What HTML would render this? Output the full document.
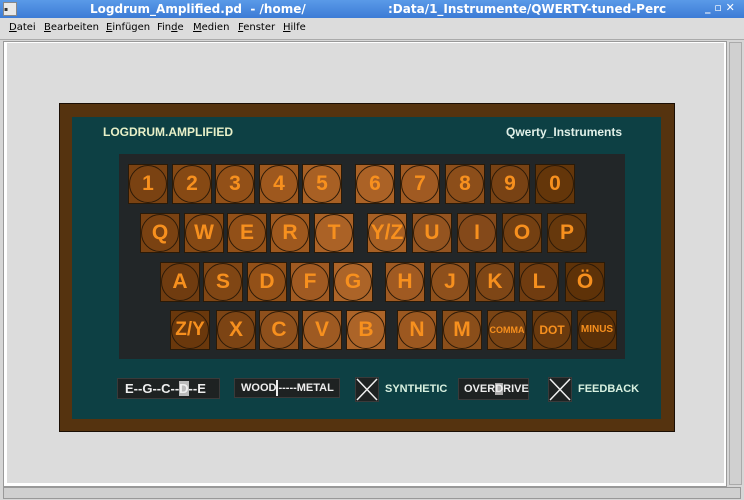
<!DOCTYPE html>
<html><head><meta charset="utf-8"><style>
*{margin:0;padding:0;box-sizing:border-box}
body{width:744px;height:500px;overflow:hidden;background:#d6d6d6;font-family:"Liberation Sans",sans-serif;position:relative}
.a{position:absolute}
.title{left:0;top:0;width:744px;height:18px;background:linear-gradient(#5a9ae8,#3c7bd6);color:#fff;font-family:"DejaVu Sans",sans-serif;font-size:12px;font-weight:bold}
.menu{top:18px;left:0;width:744px;height:22px;background:#dcdcdc;border-bottom:1px solid #aaa;font-family:"DejaVu Sans",sans-serif;font-size:10px;color:#000}
.menu span{position:absolute;top:4px}
.k{position:absolute;width:40px;height:40px;border:1px solid #2a1a08;font-weight:bold;color:#f7901e;text-align:center}
.k i{position:absolute;left:0;top:0;width:38px;height:38px;border:1px solid #2c1a08;border-radius:50%}
.k b{position:relative;display:block;line-height:38px;font-size:21px}
.box{position:absolute;background:#1e2222;border:1px solid #3a3a3a;color:#eee;font-weight:bold;font-size:11px}
.lbl{position:absolute;color:#d8f0e0;font-weight:bold;font-size:11px}
</style></head><body>
<div class="a title">
 <div class="a" style="left:3px;top:2px;width:14px;height:14px;background:#e8e8e8;border:1px solid #888;font-size:6px;color:#333;line-height:14px">▪</div>
 <span class="a" style="left:90px;top:2px">Logdrum_Amplified.pd&nbsp; - /home/</span>
 <span class="a" style="left:388px;top:2px">:Data/1_Instrumente/QWERTY-tuned-Perc</span>
 <span class="a" style="left:705px;top:1px;font-size:11px">_ ▫ ✕</span>
</div>
<div class="a menu">
 <span style="left:9px"><u>D</u>atei</span><span style="left:44px"><u>B</u>earbeiten</span><span style="left:106px"><u>E</u>infügen</span><span style="left:157px">Fin<u>d</u>e</span><span style="left:193px"><u>M</u>edien</span><span style="left:238px"><u>F</u>enster</span><span style="left:283px"><u>H</u>ilfe</span>
</div>
<div class="a" style="left:3px;top:41px;width:724px;height:446px;background:#fff;border:1px solid #999"></div>
<div class="a" style="left:7px;top:43px;width:717px;height:440px;background:#dcdcdc"></div>
<div class="a" style="left:729px;top:42px;width:13px;height:443px;background:#d0d0d0;border:1px solid #aaa"></div>
<div class="a" style="left:3px;top:487px;width:738px;height:12px;background:#d0d0d0;border:1px solid #999"></div>

<div class="a" style="left:59px;top:103px;width:616px;height:329px;background:#55330f;border:1px solid #1a0e04"></div>
<div class="a" style="left:72px;top:117px;width:589px;height:302px;background:#0d4044"></div>
<div class="a" style="left:103px;top:125px;color:#e8f0c8;font-weight:bold;font-size:12px">LOGDRUM.AMPLIFIED</div>
<div class="a" style="left:506px;top:125px;color:#e0f0e8;font-weight:bold;font-size:12px">Qwerty_Instruments</div>
<div class="a" style="left:119px;top:154px;width:506px;height:205px;background:#222628"></div>

<div class="k" style="left:128px;top:164px;background:#7a4212"><i></i><b>1</b></div>
<div class="k" style="left:172px;top:164px;background:#864914"><i></i><b>2</b></div>
<div class="k" style="left:215px;top:164px;background:#925018"><i></i><b>3</b></div>
<div class="k" style="left:259px;top:164px;background:#9e581e"><i></i><b>4</b></div>
<div class="k" style="left:302px;top:164px;background:#a86024"><i></i><b>5</b></div>
<div class="k" style="left:355px;top:164px;background:#ab6226"><i></i><b>6</b></div>
<div class="k" style="left:400px;top:164px;background:#a05a22"><i></i><b>7</b></div>
<div class="k" style="left:445px;top:164px;background:#8c4e1a"><i></i><b>8</b></div>
<div class="k" style="left:490px;top:164px;background:#784214"><i></i><b>9</b></div>
<div class="k" style="left:535px;top:164px;background:#64360a"><i></i><b>0</b></div>
<div class="k" style="left:140px;top:213px;background:#7a4212"><i></i><b>Q</b></div>
<div class="k" style="left:184px;top:213px;background:#864914"><i></i><b>W</b></div>
<div class="k" style="left:227px;top:213px;background:#925018"><i></i><b>E</b></div>
<div class="k" style="left:270px;top:213px;background:#9e581e"><i></i><b>R</b></div>
<div class="k" style="left:314px;top:213px;background:#ab6226"><i></i><b>T</b></div>
<div class="k" style="left:367px;top:213px;background:#a86024"><i></i><b>Y/Z</b></div>
<div class="k" style="left:412px;top:213px;background:#945420"><i></i><b>U</b></div>
<div class="k" style="left:457px;top:213px;background:#84491a"><i></i><b>I</b></div>
<div class="k" style="left:502px;top:213px;background:#744012"><i></i><b>O</b></div>
<div class="k" style="left:547px;top:213px;background:#66380c"><i></i><b>P</b></div>
<div class="k" style="left:160px;top:262px;background:#703c10"><i></i><b>A</b></div>
<div class="k" style="left:203px;top:262px;background:#804614"><i></i><b>S</b></div>
<div class="k" style="left:247px;top:262px;background:#925018"><i></i><b>D</b></div>
<div class="k" style="left:290px;top:262px;background:#a05a22"><i></i><b>F</b></div>
<div class="k" style="left:333px;top:262px;background:#ac6428"><i></i><b>G</b></div>
<div class="k" style="left:385px;top:262px;background:#a05a22"><i></i><b>H</b></div>
<div class="k" style="left:430px;top:262px;background:#8e501c"><i></i><b>J</b></div>
<div class="k" style="left:475px;top:262px;background:#7e4616"><i></i><b>K</b></div>
<div class="k" style="left:519px;top:262px;background:#703c10"><i></i><b>L</b></div>
<div class="k" style="left:565px;top:262px;background:#5e3208"><i></i><b>Ö</b></div>
<div class="k" style="left:170px;top:310px;background:#6a380c"><i></i><b style="font-size:19px">Z/Y</b></div>
<div class="k" style="left:216px;top:310px;background:#7c4414"><i></i><b>X</b></div>
<div class="k" style="left:259px;top:310px;background:#8e501c"><i></i><b>C</b></div>
<div class="k" style="left:302px;top:310px;background:#9e5a22"><i></i><b>V</b></div>
<div class="k" style="left:346px;top:310px;background:#ac6428"><i></i><b>B</b></div>
<div class="k" style="left:397px;top:310px;background:#9c5820"><i></i><b>N</b></div>
<div class="k" style="left:442px;top:310px;background:#8a4e1a"><i></i><b>M</b></div>
<div class="k" style="left:487px;top:310px;background:#7a4414"><i></i><b style="font-size:9px">COMMA</b></div>
<div class="k" style="left:532px;top:310px;background:#6a3a0e"><i></i><b style="font-size:12px">DOT</b></div>
<div class="k" style="left:577px;top:310px;background:#5a3008"><i></i><b style="font-size:10px">MINUS</b></div>

<div class="box" style="left:117px;top:378px;width:103px;height:21px;font-size:13px;line-height:20px;padding-left:7px">E--G--C--<span style="background:#bbb;color:#eee">D</span>--E</div>
<div class="box" style="left:234px;top:378px;width:106px;height:20px;line-height:18px;padding-left:6px">WOOD<span style="display:inline-block;width:2px;height:16px;background:#eee;vertical-align:middle"></span>-----METAL</div>
<div class="box" style="left:355px;top:377px;width:24px;height:25px"><svg width="22" height="23"><path d="M1 1L21 22M21 1L1 22" stroke="#eee" stroke-width="1.5"/></svg></div>
<div class="lbl" style="left:385px;top:383px">SYNTHETIC</div>
<div class="box" style="left:458px;top:378px;width:71px;height:22px;line-height:21px;padding-left:5px">OVER<span style="background:#aaa;color:#eee">D</span>RIVE</div>
<div class="box" style="left:548px;top:377px;width:24px;height:25px"><svg width="22" height="23"><path d="M1 1L21 22M21 1L1 22" stroke="#eee" stroke-width="1.5"/></svg></div>
<div class="lbl" style="left:578px;top:383px">FEEDBACK</div>
</body></html>
